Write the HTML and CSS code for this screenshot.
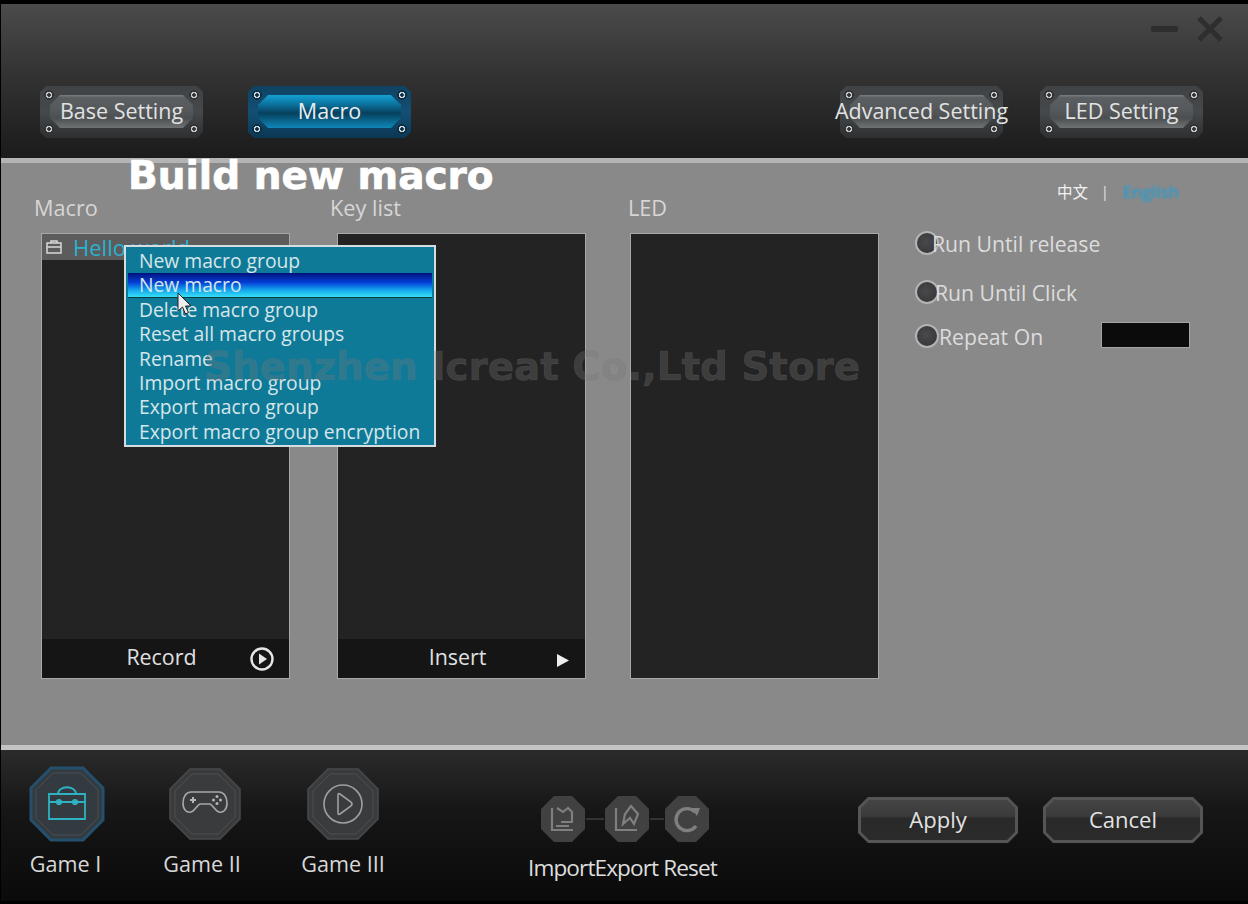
FILE: index.html
```html
<!DOCTYPE html>
<html lang="en">
<head>
<meta charset="UTF-8" />
<title>Macro</title>
<link rel="stylesheet" href="styles.css">
</head>
<body>

<div class="app">

  <!-- Header -->
  <header class="top">
    <div class="win-ctrl">
      <span class="win-min"></span>
      <svg class="win-close" viewBox="0 0 28 28"><path d="M3 3 L25 25 M25 3 L3 25" stroke="#2e2e2e" stroke-width="5" fill="none"/></svg>
    </div>
    <nav class="nav">
      <div class="nav-btn"><span class="nav-face">Base Setting</span></div>
      <div class="nav-btn active"><span class="nav-face">Macro</span></div>
      <div class="nav-btn push"><span class="nav-face">Advanced Setting</span></div>
      <div class="nav-btn last"><span class="nav-face">LED Setting</span></div>
    </nav>
  </header>

  <!-- Main -->
  <main class="main">
    <div class="col col-macro">
      <div class="col-label">Macro</div>
      <div class="panel">
        <div class="macro-row">
          <svg class="case-icon" viewBox="0 0 18 16"><path d="M6 4 V2 H12 V4 M2 4 H16 V14 H2 Z M2 8 H16" stroke="#d8d8d8" stroke-width="1.5" fill="none"/></svg>
          <span class="macro-name">Hello world</span>
        </div>
        <div class="panel-fill"></div>
        <div class="panel-bar">
          <span>Record</span>
          <svg class="bar-icon" viewBox="0 0 26 26"><circle cx="13" cy="13" r="10.5" stroke="#e6e6e6" stroke-width="2.4" fill="none"/><path d="M10 7.5 L18 13 L10 18.5 Z" fill="#e6e6e6"/></svg>
        </div>
      </div>
    </div>

    <div class="col col-keys">
      <div class="col-label">Key list</div>
      <div class="panel">
        <div class="panel-fill"></div>
        <div class="panel-bar">
          <span>Insert</span>
          <svg class="bar-icon insert-icon" viewBox="0 0 26 26"><path d="M7 7 L19 13.5 L7 20 Z" fill="#eee"/></svg>
        </div>
      </div>
    </div>

    <div class="col col-led">
      <div class="col-label">LED</div>
      <div class="panel"></div>
    </div>

    <div class="options">
      <div class="lang"><span class="lang-cn">中文</span><span class="lang-sep">|</span><span class="lang-en">English</span></div>
      <div class="opt opt-1"><span class="radio"></span>Run Until release</div>
      <div class="opt opt-2"><span class="radio"></span><span class="opt-text-2">Run Until Click</span></div>
      <div class="opt opt-3"><span class="radio"></span><span class="opt-text-3">Repeat On</span><span class="repeat-box"></span></div>
    </div>

    <!-- overlays -->
    <div class="page-title">Build new macro</div>
    <ul class="menu">
      <li>New macro group</li>
      <li class="sel">New macro</li>
      <li>Delete macro group</li>
      <li>Reset all macro groups</li>
      <li>Rename</li>
      <li>Import macro group</li>
      <li>Export macro group</li>
      <li>Export macro group encryption</li>
    </ul>
    <svg class="cursor" viewBox="0 0 16 24"><path d="M1 1 V19 L5.5 15 L8.5 22 L11.5 20.5 L8.5 14 H14 Z" fill="#eee" stroke="#222" stroke-width="1"/></svg>
    <div class="watermark">Shenzhen Icreat Co.,Ltd Store</div>
  </main>

  <!-- Footer -->
  <footer class="bottom">
    <div class="games">
      <div class="game active">
        <svg class="game-icon" viewBox="0 0 76 76">
          <polygon points="22,2 54,2 74,22 74,54 54,74 22,74 2,54 2,22" fill="#333a40" stroke="#24506e" stroke-width="3"/>
          <polygon points="24,7 52,7 69,24 69,52 52,69 24,69 7,52 7,24" fill="none" stroke="#4a4f53" stroke-width="1"/>
          <g fill="none" stroke="#2fb2c4" stroke-width="1.8">
            <path d="M29 28 C29 19 47 19 47 28"/>
            <path d="M20 28 H56 V36 H20 Z"/>
            <path d="M20 36 V53 H56 V36"/>
            <circle cx="30" cy="36" r="2.2"/>
            <circle cx="46" cy="36" r="2.2"/>
          </g>
        </svg>
        <span>Game I</span>
      </div>
      <div class="game">
        <svg class="game-icon" viewBox="0 0 76 76">
          <polygon points="23,3 53,3 73,23 73,53 53,73 23,73 3,53 3,23" fill="#3a3b3d" stroke="#47494b" stroke-width="1.5"/>
          <polygon points="25,8 51,8 68,25 68,51 51,68 25,68 8,51 8,25" fill="none" stroke="#4c4e50" stroke-width="1"/>
          <path d="M24 26 H52 C57 26 60 31 60 37 C60 44 56 47 52 46 C48 45 46 39 43 38 H33 C30 39 28 45 24 46 C20 47 16 44 16 37 C16 31 19 26 24 26 Z" fill="none" stroke="#a8a8a8" stroke-width="1.6"/>
          <path d="M26 31 V37 M23 34 H29" stroke="#b5b5b5" stroke-width="2" fill="none"/>
          <g fill="#b5b5b5"><circle cx="50" cy="30.5" r="1.5"/><circle cx="50" cy="37.5" r="1.5"/><circle cx="46.5" cy="34" r="1.5"/><circle cx="53.5" cy="34" r="1.5"/></g>
        </svg>
        <span>Game II</span>
      </div>
      <div class="game">
        <svg class="game-icon" viewBox="0 0 76 76">
          <polygon points="23,3 53,3 73,23 73,53 53,73 23,73 3,53 3,23" fill="#3a3b3d" stroke="#47494b" stroke-width="1.5"/>
          <polygon points="25,8 51,8 68,25 68,51 51,68 25,68 8,51 8,25" fill="none" stroke="#4c4e50" stroke-width="1"/>
          <circle cx="38" cy="38" r="19" fill="none" stroke="#a0a0a0" stroke-width="1.6"/>
          <path d="M33 29 Q33 27 35 28 L46 36 Q48 38 46 40 L35 48 Q33 49 33 47 Z" fill="none" stroke="#a0a0a0" stroke-width="1.6"/>
        </svg>
        <span>Game III</span>
      </div>
    </div>

    <div class="tools">
      <div class="tool-icons">
        <svg class="tool" viewBox="0 0 46 48">
          <polygon points="14,1 32,1 45,14 45,34 32,47 14,47 1,34 1,14" fill="#414141"/>
          <path d="M12 13 V35 H33 M16 31 H29 M17 13 L23 17 L28 13 L32 17 V27 H21" fill="none" stroke="#7f7f7f" stroke-width="2.2"/>
        </svg>
        <span class="tool-link"></span>
        <svg class="tool" viewBox="0 0 46 48">
          <polygon points="14,1 32,1 45,14 45,34 32,47 14,47 1,34 1,14" fill="#414141"/>
          <path d="M12 13 V35 H33 M19 29 L21 19 L27 11 L34 19 L30 29 L26 23 Z" fill="none" stroke="#7f7f7f" stroke-width="2.2"/>
        </svg>
        <span class="tool-link short"></span>
        <svg class="tool" viewBox="0 0 46 48">
          <polygon points="14,1 32,1 45,14 45,34 32,47 14,47 1,34 1,14" fill="#414141"/>
          <path d="M31 17 A11 11 0 1 0 32 31" fill="none" stroke="#7f7f7f" stroke-width="3.4"/>
          <path d="M27 13 L36 13 L33 21 Z" fill="#7f7f7f"/>
        </svg>
      </div>
      <div class="tool-labels"><span>Import</span><span>Export</span><span class="tool-reset">Reset</span></div>
    </div>

    <div class="actions">
      <div class="act-btn"><span class="act-face">Apply</span></div>
      <div class="act-btn"><span class="act-face">Cancel</span></div>
    </div>
  </footer>

</div>

</body>
</html>
```

FILE: styles.css
```css
* {
  box-sizing: border-box;
}
body {
  margin: 0;
  background: #000;
  font-family: 'Open Sans', 'Noto Sans', sans-serif;
  color: #ddd;
}
.app {
  width: 1248px;
  height: 904px;
  padding: 4px 0 3px 1px;
  display: flex;
  flex-direction: column;
  overflow: hidden;
}

/* Header */
.top {
  height: 154px;
  padding: 11px 24px 0 39px;
  background: linear-gradient(180deg, #4b4b4b 0%, #333 45%, #1b1b1b 100%);
}
.win-ctrl {
  display: flex;
  justify-content: flex-end;
  align-items: center;
  gap: 18px;
  height: 28px;
}
.win-min {
  width: 27px;
  height: 6px;
  background: #2e2e2e;
  border-radius: 2px;
}
.win-close {
  width: 28px;
  height: 28px;
}
.nav {
  display: flex;
  gap: 45px;
  margin: 43px 21px 0 0;
}
.nav .push {
  margin-left: auto;
}
.nav .last {
  margin-left: -8px;
}
.nav-btn {
  position: relative;
  width: 163px;
  height: 52px;
}
/* plate and screws */
.nav-btn::before {
  content: '';
  position: absolute;
  inset: 0;
  clip-path: polygon(6px 0, calc(100% - 6px) 0, 100% 6px, 100% calc(100% - 6px), calc(100% - 6px) 100%, 6px 100%, 0 calc(100% - 6px), 0 6px);
  background:
    radial-gradient(circle at 9px 9px, #2e3133 0 1.5px, #c8c8c8 2px 3px, #333 3.5px 4.5px, transparent 5px),
    radial-gradient(circle at calc(100% - 9px) 9px, #2e3133 0 1.5px, #c8c8c8 2px 3px, #333 3.5px 4.5px, transparent 5px),
    radial-gradient(circle at 9px calc(100% - 9px), #2e3133 0 1.5px, #c8c8c8 2px 3px, #333 3.5px 4.5px, transparent 5px),
    radial-gradient(circle at calc(100% - 9px) calc(100% - 9px), #2e3133 0 1.5px, #c8c8c8 2px 3px, #333 3.5px 4.5px, transparent 5px),
    linear-gradient(180deg, #3f4346, #45494b 50%, #2d2f31);
}
.nav-btn.active::before {
  background:
    radial-gradient(circle at 9px 9px, #0e2c40 0 1.5px, #c8d8e0 2px 3px, #0e2c40 3.5px 4.5px, transparent 5px),
    radial-gradient(circle at calc(100% - 9px) 9px, #0e2c40 0 1.5px, #c8d8e0 2px 3px, #0e2c40 3.5px 4.5px, transparent 5px),
    radial-gradient(circle at 9px calc(100% - 9px), #0e2c40 0 1.5px, #c8d8e0 2px 3px, #0e2c40 3.5px 4.5px, transparent 5px),
    radial-gradient(circle at calc(100% - 9px) calc(100% - 9px), #0e2c40 0 1.5px, #c8d8e0 2px 3px, #0e2c40 3.5px 4.5px, transparent 5px),
    linear-gradient(180deg, #0f4263, #134f74 50%, #0b3753);
}
/* bevelled face */
.nav-btn::after {
  content: '';
  position: absolute;
  inset: 9px 10px 10px;
  clip-path: polygon(10px 0, calc(100% - 10px) 0, 100% 10px, 100% calc(100% - 10px), calc(100% - 10px) 100%, 10px 100%, 0 calc(100% - 10px), 0 10px);
  background: linear-gradient(180deg, #7b7e7f 0, #5b5f61 8%, #55595b 45%, #4b4f51 70%, #6f7374 100%);
}
.nav-btn.active::after {
  background: linear-gradient(180deg, #12a0d4 0%, #0b6f99 30%, #07405d 55%, #0f88b8 100%);
}
.nav-face {
  position: relative;
  z-index: 1;
  display: flex;
  justify-content: center;
  align-items: center;
  height: 100%;
  padding-bottom: 3px;
  font-size: 21.5px;
  line-height: 1;
  white-space: nowrap;
  color: #e2e2e2;
}
.nav-btn.active .nav-face {
  color: #e8eef2;
}

/* Main */
.main {
  position: relative;
  flex: 1;
  display: flex;
  padding: 33px 0 0 40px;
  background: #8a8989;
  border-top: 5px solid #b4b4b4;
  border-bottom: 5px solid #c4c4c4;
}
.col {
  width: 249px;
}
.col-keys {
  margin-left: 47px;
}
.col-led {
  margin-left: 44px;
}
.col-label {
  height: 37px;
  margin-left: -7px;
  font-size: 21.7px;
  line-height: 24px;
  color: #d6d6d6;
}
.col-led .col-label {
  margin-left: -2px;
}
.panel {
  display: flex;
  flex-direction: column;
  height: 446px;
  background: #232323;
  border: 1px solid #a8a8a8;
}
.panel-fill {
  flex: 1;
}
.macro-row {
  display: flex;
  align-items: center;
  height: 26px;
  padding-left: 3px;
  background: #5c5c5c;
}
.case-icon {
  width: 18px;
  height: 16px;
}
.macro-name {
  margin-left: 10px;
  font-size: 22px;
  color: #29b2d2;
}
.panel-bar {
  display: flex;
  align-items: center;
  justify-content: center;
  position: relative;
  height: 39px;
  padding-bottom: 4px;
  font-size: 21.4px;
  color: #e0e0e0;
  background: #151515;
}
.panel-bar span {
  margin-right: 8px;
}
.bar-icon {
  position: absolute;
  right: 14px;
  top: 7px;
  width: 26px;
  height: 26px;
}
.insert-icon {
  right: 9px;
  top: 8px;
}

/* Right options */
.options {
  width: 275px;
  margin-left: 36px;
  font-size: 21.2px;
  color: #dcdcdc;
}
.lang {
  display: flex;
  align-items: center;
  margin-top: -17px;
  padding-left: 142px;
  height: 24px;
  white-space: nowrap;
}
.lang-cn {
  font-family: 'Noto Sans CJK SC', sans-serif;
  font-size: 15.5px;
  color: #f2f2f2;
}
.lang-sep {
  margin: 0 14px 0 13px;
  font-size: 14px;
  color: #e6e6e6;
}
.lang-en {
  font-size: 16.4px;
  color: #2a9ccb;
  font-weight: 600;
  filter: blur(1.2px);
}
.opt {
  display: flex;
  align-items: center;
  height: 26px;
}
.opt-1 {
  margin-top: 27px;
}
.opt-2 {
  margin-top: 23px;
}
.opt-3 {
  margin-top: 18px;
}
.radio {
  flex: none;
  width: 24px;
  height: 24px;
  margin-right: -7px;
  border: 2px solid #b4b4b4;
  border-radius: 50%;
  background: radial-gradient(circle at 45% 45%, #4a4a4c, #333335);
}
.opt-text-2 {
  margin-left: 3px;
}
.opt-text-3 {
  margin-left: 7px;
}
.repeat-box {
  width: 89px;
  height: 26px;
  margin: -3px 0 0 auto;
  background: #0b0b0b;
  border: 1px solid #a5a5a5;
}

/* Overlays on the main area */
.page-title {
  position: absolute;
  left: 127px;
  top: -10px;
  font-family: 'DejaVu Sans', sans-serif;
  font-weight: 700;
  font-size: 39px;
  line-height: 46px;
  color: #fff;
  -webkit-text-stroke: 0.7px #fff;
  white-space: nowrap;
}
.menu {
  position: absolute;
  left: 123px;
  top: 82px;
  width: 312px;
  margin: 0;
  padding: 2px 2px 1px;
  list-style: none;
  background: #0f7a98;
  border: 2px solid #d5dde0;
}
.menu li {
  height: 24.4px;
  padding-left: 11px;
  font-size: 19.3px;
  line-height: 24px;
  color: #d7e6ea;
  white-space: nowrap;
}
.menu li.sel {
  background: linear-gradient(180deg, #00127c 0%, #0440d8 40%, #12a4ee 70%, #38e0f4 100%);
  border-bottom: 1px solid #0a3a44;
}
.cursor {
  position: absolute;
  left: 176px;
  top: 129px;
  width: 16px;
  height: 24px;
}
.watermark {
  position: absolute;
  left: 203px;
  top: 181px;
  font-family: 'DejaVu Sans', sans-serif;
  font-weight: 700;
  font-size: 38.8px;
  line-height: 46px;
  color: rgba(120, 120, 120, 0.32);
  -webkit-text-stroke: 0.7px rgba(120, 120, 120, 0.32);
  white-space: nowrap;
}

/* Footer */
.bottom {
  display: flex;
  height: 151px;
  padding: 16px 45px 0 28px;
  background: linear-gradient(180deg, #2b2b2b 0%, #161616 40%, #0a0a0a 100%);
}
.games {
  display: flex;
  gap: 62px;
}
.game {
  display: flex;
  flex-direction: column;
  align-items: center;
  width: 76px;
  font-size: 21.6px;
  color: #d8d8d8;
  white-space: nowrap;
}
.game-icon {
  flex: none;
  width: 76px;
  height: 76px;
}
.game span {
  margin-top: 8px;
  line-height: 28px;
}
.game:nth-child(1) span {
  margin-right: 3px;
}
.game:nth-child(2) span {
  margin-right: 6px;
}
.tools {
  margin-left: 147px;
  width: 188px;
  padding-top: 29px;
}
.tool-icons {
  display: flex;
  align-items: center;
  padding-left: 12px;
}
.tool {
  flex: none;
  width: 46px;
  height: 48px;
}
.tool-link {
  width: 18px;
  height: 2px;
  background: #333;
}
.tool-link.short {
  width: 14px;
}
.tool-labels {
  display: flex;
  margin-top: 10px;
  font-size: 22.6px;
  letter-spacing: -0.9px;
  line-height: 30px;
  color: #dedede;
  white-space: nowrap;
}
.tool-reset {
  margin-left: 5px;
}
.actions {
  display: flex;
  gap: 25px;
  margin-left: auto;
  padding-top: 31px;
}
.act-btn {
  width: 160px;
  height: 46px;
  padding: 3px;
  clip-path: polygon(10px 0, calc(100% - 10px) 0, 100% 10px, 100% calc(100% - 10px), calc(100% - 10px) 100%, 10px 100%, 0 calc(100% - 10px), 0 10px);
  background: #555;
}
.act-face {
  display: flex;
  justify-content: center;
  align-items: center;
  height: 100%;
  padding-bottom: 2px;
  font-size: 22px;
  color: #e2e2e2;
  clip-path: polygon(8px 0, calc(100% - 8px) 0, 100% 8px, 100% calc(100% - 8px), calc(100% - 8px) 100%, 8px 100%, 0 calc(100% - 8px), 0 8px);
  background: linear-gradient(180deg, #444 0%, #3b3b3b 40%, #292929 46%, #2b2b2b 100%);
}
```
